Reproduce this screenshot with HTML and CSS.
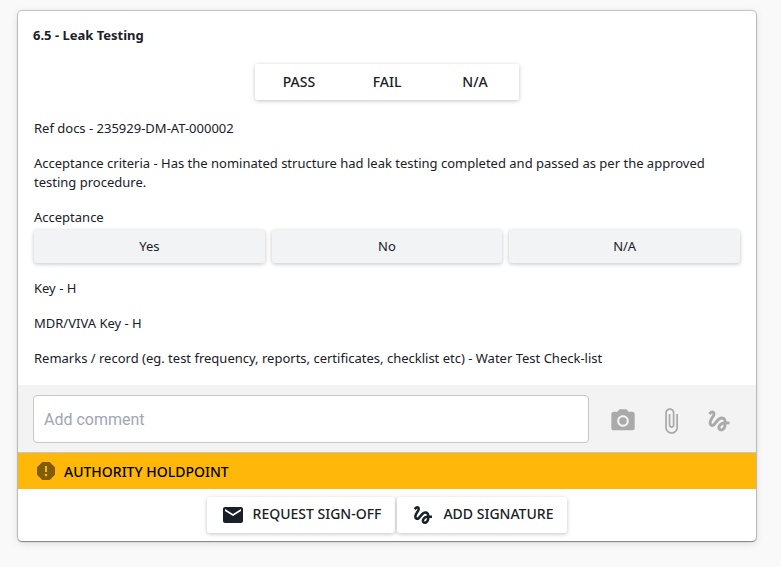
FILE: index.html
```html
<!DOCTYPE html>
<html lang="en">
<head>
<meta charset="utf-8">
<meta name="viewport" content="width=device-width, initial-scale=1">
<title>Leak Testing</title>
<link rel="stylesheet" href="styles.css">
</head>
<body>
<main class="card">
  <section class="details">
    <h1 class="title">6.5 - Leak Testing</h1>
    <div class="results">
      <button type="button" class="result">PASS</button>
      <button type="button" class="result">FAIL</button>
      <button type="button" class="result">N/A</button>
    </div>
    <div class="items">
      <p>Ref docs - 235929-DM-AT-000002</p>
      <p>Acceptance criteria - Has the nominated structure had leak testing completed and passed as per the approved testing procedure.</p>
      <div role="group" aria-labelledby="acceptance">
        <p id="acceptance">Acceptance</p>
        <div class="choices">
          <button type="button" class="choice">Yes</button>
          <button type="button" class="choice">No</button>
          <button type="button" class="choice">N/A</button>
        </div>
      </div>
      <p>Key - H</p>
      <p>MDR/VIVA Key - H</p>
      <p>Remarks / record (eg. test frequency, reports, certificates, checklist etc) - Water Test Check-list</p>
    </div>
  </section>
  <form class="comment">
    <input class="comment-box" type="text" placeholder="Add comment" aria-label="Add comment">
    <div class="tools">
      <button type="button" class="tool" aria-label="Add photo"><svg viewBox="0 0 24 24"><circle cx="12" cy="12" r="3.2"/><path d="M9 2L7.17 4H4c-1.1 0-2 .9-2 2v12c0 1.100.9 2 2 2h16c1.100 0 2-.9 2-2V6c0-1.100-.9-2-2-2h-3.170L15 2H9zm3 15c-2.760 0-5-2.240-5-5s2.240-5 5-5 5 2.240 5 5-2.240 5-5 5z"/></svg></button>
      <button type="button" class="tool" aria-label="Attach file"><svg viewBox="0 0 24 24"><path d="M16.500 6v11.500c0 2.210-1.790 4-4 4s-4-1.790-4-4V5c0-1.380 1.120-2.500 2.500-2.500s2.500 1.120 2.500 2.500v10.500c0 .55-.45 1-1 1s-1-.45-1-1V6H10v9.500c0 1.380 1.120 2.500 2.500 2.500s2.500-1.120 2.500-2.500V5c0-2.210-1.790-4-4-4S7 2.790 7 5v12.500c0 3.040 2.460 5.500 5.500 5.500s5.500-2.460 5.500-5.500V6h-1.500z"/></svg></button>
      <button type="button" class="tool" aria-label="Sign"><svg viewBox="0 0 24 24"><path d="M4.590 6.890c.7-.71 1.400-1.350 1.710-1.220.5.2 0 1.030-.3 1.520-.25.42-2.860 3.890-2.860 6.310 0 1.280.48 2.340 1.340 2.980.75.56 1.740.73 2.640.46 1.070-.31 1.950-1.400 3.060-2.770 1.210-1.490 2.830-3.440 4.080-3.440 1.630 0 1.650 1.010 1.760 1.790-3.780.64-5.380 3.670-5.380 5.370s1.440 3.090 3.210 3.090c1.630 0 4.290-1.330 4.690-6.100H21v-2.500h-2.470c-.15-1.650-1.090-4.200-4.030-4.200-2.250 0-4.180 1.910-4.940 2.840-.58.73-2.060 2.480-2.290 2.720-.25.3-.68.84-1.110.84-.45 0-.72-.83-.36-1.920.35-1.090 1.400-2.860 1.850-3.520.78-1.140 1.300-1.920 1.300-3.280C8.950 3.690 7.310 3 6.440 3 5.120 3 3.970 4 3.720 4.250c-.36.36-.66.66-.88.93l1.750 1.710zm9.290 11.660c-.31 0-.74-.26-.74-.72 0-.6.73-2.200 2.870-2.760-.3 2.690-1.430 3.480-2.130 3.480z"/></svg></button>
    </div>
  </form>
  <div class="holdpoint">
    <svg viewBox="0 0 24 24" aria-hidden="true"><path d="M15.730 3H8.270L3 8.270v7.460L8.270 21h7.460L21 15.730V8.270L15.730 3zM12 17.300c-.72 0-1.300-.58-1.300-1.300s.58-1.300 1.300-1.300 1.300.58 1.300 1.300-.58 1.300-1.300 1.300zm1-4.300h-2V7h2v6z"/></svg>
    <span>AUTHORITY HOLDPOINT</span>
  </div>
  <footer class="actions">
    <button type="button" class="action"><svg viewBox="0 0 24 24" aria-hidden="true"><path d="M20 4H4c-1.100 0-1.990.9-1.990 2L2 18c0 1.100.9 2 2 2h16c1.100 0 2-.9 2-2V6c0-1.100-.9-2-2-2zm0 4l-8 5-8-5V6l8 5 8-5v2z"/></svg><span>REQUEST SIGN-OFF</span></button>
    <button type="button" class="action"><svg viewBox="0 0 24 24" aria-hidden="true"><path d="M4.590 6.890c.7-.71 1.400-1.350 1.710-1.220.5.2 0 1.030-.3 1.520-.25.42-2.860 3.890-2.860 6.310 0 1.280.48 2.340 1.340 2.980.75.56 1.740.73 2.640.46 1.070-.31 1.950-1.400 3.060-2.770 1.210-1.490 2.830-3.440 4.080-3.440 1.630 0 1.650 1.010 1.760 1.790-3.780.64-5.380 3.670-5.380 5.370s1.440 3.090 3.210 3.090c1.630 0 4.290-1.330 4.690-6.100H21v-2.500h-2.470c-.15-1.650-1.090-4.200-4.030-4.200-2.250 0-4.180 1.910-4.940 2.840-.58.73-2.060 2.480-2.290 2.720-.25.3-.68.84-1.110.84-.45 0-.72-.83-.36-1.920.35-1.090 1.400-2.860 1.850-3.520.78-1.140 1.300-1.920 1.300-3.280C8.950 3.690 7.310 3 6.440 3 5.120 3 3.970 4 3.720 4.250c-.36.36-.66.66-.88.93l1.750 1.710zm9.290 11.660c-.31 0-.74-.26-.74-.72 0-.6.73-2.200 2.870-2.760-.3 2.690-1.430 3.480-2.130 3.480z"/></svg><span>ADD SIGNATURE</span></button>
  </footer>
</main>
</body>
</html>
```
FILE: styles.css
```css
* {
  box-sizing: border-box;
}

body {
  margin: 0;
  padding: 11px 25px 26px 18px;
  background: #f9f9f9;
  color: #1a2027;
  font-family: "Segoe UI", "Noto Sans", "Open Sans", sans-serif;
  font-size: 13px;
  line-height: 19px;
}

button {
  margin: 0;
  border: 0;
  color: inherit;
  font: inherit;
  cursor: pointer;
}

svg {
  display: block;
  flex: none;
  fill: currentColor;
}

p {
  margin: 0;
}

.card {
  background: #fff;
  border-radius: 4px;
  box-shadow: 0 0 1px 1px rgba(0, 0, 0, 0.2), 0 1px 1px rgba(0, 0, 0, 0.3), 0 2px 8px rgba(0, 0, 0, 0.12);
  overflow: hidden;
}

.details {
  padding: 15px 15px 17px;
}

.title {
  margin: 0 0 19px;
  font-size: 13px;
  font-weight: 700;
}

.results {
  display: flex;
  width: fit-content;
  margin: 0 auto 19px;
  border-radius: 3px;
  box-shadow: 0 1px 4px rgba(0, 0, 0, 0.24);
}

.result {
  min-width: 88px;
  height: 36px;
  padding: 0 16px 2px;
  border-radius: 3px;
  background: #fff;
  font-size: 14px;
  font-weight: 500;
}

.items {
  display: flex;
  flex-direction: column;
  gap: 16px;
}

.items p {
  padding: 0 1px;
}

.choices {
  display: grid;
  grid-template-columns: repeat(3, 1fr);
  gap: 7px;
  padding: 3px 1px 0;
}

.choice {
  height: 33px;
  border-radius: 3px;
  background: #f2f3f5;
  box-shadow: 0 1px 4px rgba(0, 0, 0, 0.24);
}

.comment {
  display: flex;
  align-items: center;
  gap: 10px;
  padding: 10px 13px 9px 15px;
  background: #f3f3f3;
  border-bottom: 1px solid #c5c7cc;
}

.comment-box {
  flex: 1;
  min-width: 0;
  height: 48px;
  padding: 0 10px;
  border: 1px solid #c8c8c8;
  border-radius: 4px;
  background: #fff;
  color: inherit;
  font-family: Roboto, sans-serif;
  font-size: 16px;
}

.comment-box::placeholder {
  color: #9fa5b2;
  opacity: 1;
}

.tools {
  display: flex;
}

.tool {
  padding: 12px 10px 8px;
  background: none;
  color: #aaa;
}

.tool svg {
  width: 28px;
  height: 28px;
}

.holdpoint {
  display: flex;
  align-items: center;
  gap: 6px;
  height: 36px;
  padding: 0 16px;
  background: #ffb80a;
  color: #000;
  font-size: 14px;
  font-weight: 500;
}

.holdpoint svg {
  width: 24px;
  height: 24px;
  fill: #805c05;
}

.actions {
  display: flex;
  justify-content: center;
  gap: 2px;
  padding: 8px;
}

.action {
  display: flex;
  align-items: center;
  gap: 8px;
  height: 36px;
  padding: 0 14px;
  border-radius: 3px;
  background: #fff;
  box-shadow: 0 1px 4px rgba(0, 0, 0, 0.24);
  font-size: 14px;
  font-weight: 500;
}

.action span {
  padding-bottom: 4px;
}

.action svg {
  width: 24px;
  height: 24px;
}
```
